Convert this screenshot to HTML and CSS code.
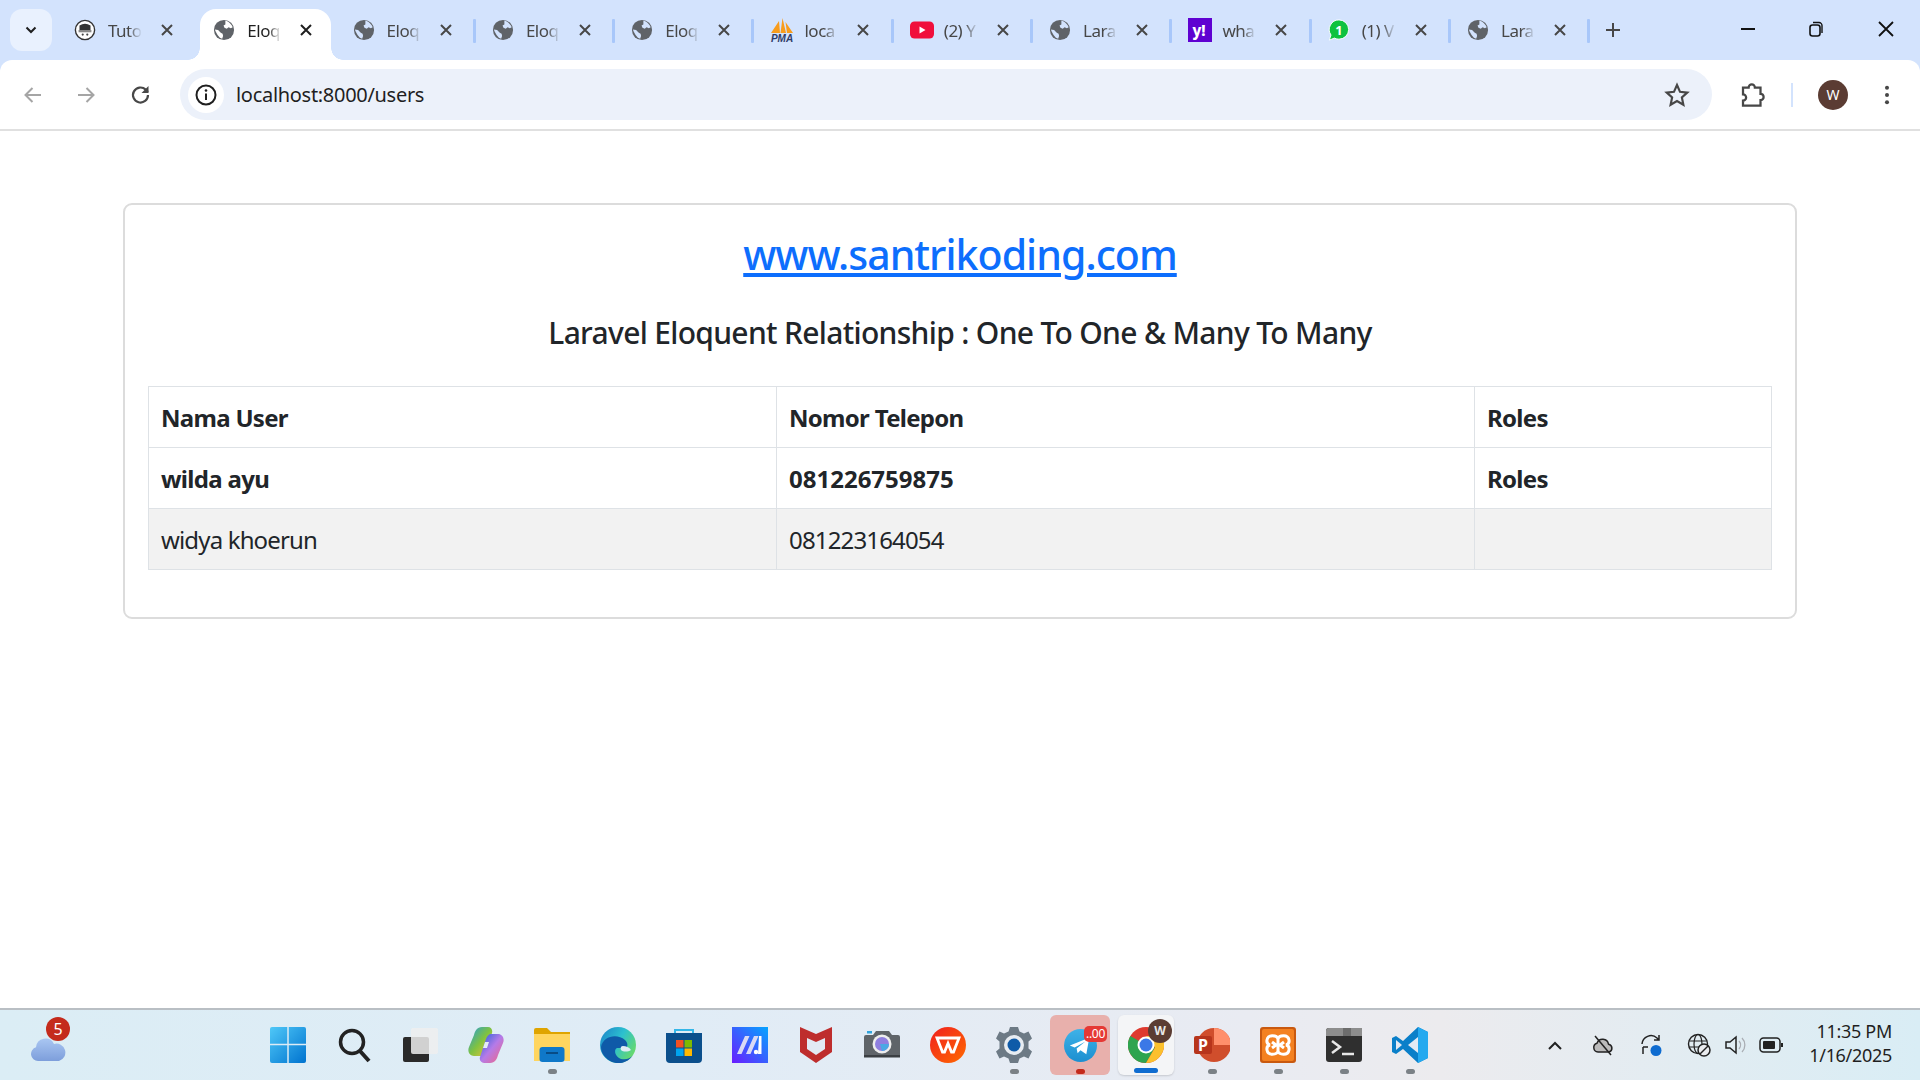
FILE: index.html
```html
<!DOCTYPE html>
<html lang="en">
<head>
    <meta charset="UTF-8">
    <title>Users</title>
    <link rel="stylesheet" href="styles.css">
</head>
<body>
    <svg class="defs" width="0" height="0">
        <symbol id="globe" viewBox="0 0 24 24">
            <circle cx="12" cy="12" r="11" fill="#5f6368"/>
            <path class="globe-cut" d="M13.500 2c2 .5 3.500 1 5 2.500 1.500 1.500 2.500 3 3 4.500l-2 1-2.500-1-2 1.500-2.500-1-1-2.500 2-1z"/>
            <path class="globe-cut" d="M2 11.500l3.500.5 3 3 2 1 .5 2.500-1 3-2.500-1-2.500-3-2-3.500z"/>
        </symbol>
        <symbol id="close" viewBox="0 0 16 16">
            <path d="M3 3l10 10M13 3L3 13" stroke="currentColor" stroke-width="2" fill="none"/>
        </symbol>
    </svg>

    <header class="tabstrip">
        <div class="tab-search">
            <svg width="14" height="14" viewBox="0 0 14 14"><path d="M2.500 4.500L7 9l4.500-4.500" stroke="#1f1f1f" stroke-width="2" fill="none"/></svg>
        </div>
        <div class="tabs">
            <div class="tab sep-none">
                <svg class="fav" viewBox="0 0 24 24">
                    <circle cx="12" cy="12" r="10.500" fill="#fff" stroke="#333" stroke-width="1.500"/>
                    <path d="M6 7q6-3.500 12 0v5H6z" fill="#333"/>
                    <path d="M5 12h14v2.500H5z" fill="#888"/>
                    <circle cx="9.500" cy="17" r="1.200" fill="#444"/><circle cx="14.500" cy="17" r="1.200" fill="#444"/>
                </svg>
                <span class="tab-title">Tuto</span>
                <svg class="tab-close"><use href="#close"/></svg>
            </div>
            <div class="tab active">
                <svg class="fav"><use href="#globe"/></svg>
                <span class="tab-title">Eloq</span>
                <svg class="tab-close"><use href="#close"/></svg>
            </div>
            <div class="tab">
                <svg class="fav"><use href="#globe"/></svg>
                <span class="tab-title">Eloq</span>
                <svg class="tab-close"><use href="#close"/></svg>
            </div>
            <div class="tab">
                <svg class="fav"><use href="#globe"/></svg>
                <span class="tab-title">Eloq</span>
                <svg class="tab-close"><use href="#close"/></svg>
            </div>
            <div class="tab">
                <svg class="fav"><use href="#globe"/></svg>
                <span class="tab-title">Eloq</span>
                <svg class="tab-close"><use href="#close"/></svg>
            </div>
            <div class="tab">
                <svg class="fav fav-wide" viewBox="0 0 24 24">
                    <path d="M1 15L9 3l1 12zM10.500 15L12.500 0l3.500 15zM17 15L15.500 4 23 15z" fill="#f89c1c"/>
                    <text x="12" y="23.500" class="pma-text">PMA</text>
                </svg>
                <span class="tab-title">loca</span>
                <svg class="tab-close"><use href="#close"/></svg>
            </div>
            <div class="tab">
                <svg class="fav fav-wide" viewBox="0 0 24 24">
                    <rect x="0" y="3.500" width="24" height="17" rx="4.500" fill="#f00f3c"/>
                    <path d="M9.500 8.500l6 3.500-6 3.500z" fill="#fff"/>
                </svg>
                <span class="tab-title">(2) Y</span>
                <svg class="tab-close"><use href="#close"/></svg>
            </div>
            <div class="tab">
                <svg class="fav"><use href="#globe"/></svg>
                <span class="tab-title">Lara</span>
                <svg class="tab-close"><use href="#close"/></svg>
            </div>
            <div class="tab">
                <svg class="fav fav-wide" viewBox="0 0 24 24">
                    <rect width="24" height="24" fill="#5f01d1"/>
                    <text x="11" y="18" class="yahoo-text">y!</text>
                </svg>
                <span class="tab-title">wha</span>
                <svg class="tab-close"><use href="#close"/></svg>
            </div>
            <div class="tab">
                <svg class="fav" viewBox="0 0 24 24">
                    <path d="M12 1a10.500 10.500 0 0 1 0 21q-3 0-5-1.200L1.500 23l1.800-5.500A10.500 10.500 0 0 1 12 1z" fill="#0fc23e" stroke="#fff" stroke-width="1"/>
                    <text x="12" y="17" class="wa-text">1</text>
                </svg>
                <span class="tab-title">(1) V</span>
                <svg class="tab-close"><use href="#close"/></svg>
            </div>
            <div class="tab">
                <svg class="fav"><use href="#globe"/></svg>
                <span class="tab-title">Lara</span>
                <svg class="tab-close"><use href="#close"/></svg>
            </div>
        </div>
        <svg class="new-tab" viewBox="0 0 16 16"><path d="M8 1v14M1 8h14" stroke="#474747" stroke-width="2" fill="none"/></svg>
        <div class="window-controls">
            <svg viewBox="0 0 16 16"><path d="M1 8h14" stroke="#111" stroke-width="2"/></svg>
            <svg viewBox="0 0 16 16"><rect x="2" y="4" width="10" height="11" rx="2.500" fill="none" stroke="#111" stroke-width="1.600"/><path d="M5 1.500h6a3 3 0 0 1 3 3V12" fill="none" stroke="#111" stroke-width="1.400"/></svg>
            <svg viewBox="0 0 16 16"><path d="M1 1l14 14M15 1L1 15" stroke="#111" stroke-width="1.800"/></svg>
        </div>
    </header>

    <nav class="toolbar">
        <svg class="tool tool-off" viewBox="0 0 24 24"><path d="M20 12H5M11.500 5L4.500 12l7 7" fill="none" stroke="#a5a5a5" stroke-width="2"/></svg>
        <svg class="tool tool-off" viewBox="0 0 24 24"><path d="M4 12h15M12.500 5l7 7-7 7" fill="none" stroke="#a5a5a5" stroke-width="2"/></svg>
        <svg class="tool" viewBox="0 0 24 24"><path d="M19 12a7.500 7.500 0 1 1-2.300-5.400L19 9" fill="none" stroke="#474747" stroke-width="2.200"/><path d="M19.500 3v7h-7z" fill="#474747"/></svg>
        <div class="omnibox">
            <div class="site-chip">
                <svg width="24" height="24" viewBox="0 0 24 24"><circle cx="12" cy="12" r="9.500" fill="none" stroke="#1f1f1f" stroke-width="2"/><path d="M12 10.500V17" stroke="#1f1f1f" stroke-width="2"/><circle cx="12" cy="7.500" r="1.300" fill="#1f1f1f"/></svg>
            </div>
            <span class="url">localhost:8000/users</span>
            <svg class="star" viewBox="0 0 24 24"><path d="M12 2.800l2.800 6.300 6.700.7-5 4.500 1.400 6.700-5.900-3.400-5.900 3.400 1.400-6.700-5-4.500 6.700-.7z" fill="none" stroke="#474747" stroke-width="2"/></svg>
        </div>
        <svg class="ext" viewBox="0 0 24 24"><path d="M4 6h4.500a2.500 2.500 0 0 1 5 0H18v5a2.500 2.500 0 0 1 0 5v4.500H4v-4a2.500 2.500 0 0 0 0-5z" fill="none" stroke="#474747" stroke-width="1.800"/></svg>
        <div class="tool-sep"></div>
        <div class="avatar">W</div>
        <svg class="menu-dots" viewBox="0 0 6 24"><circle cx="3" cy="4" r="2.200" fill="#474747"/><circle cx="3" cy="12" r="2.200" fill="#474747"/><circle cx="3" cy="20" r="2.200" fill="#474747"/></svg>
    </nav>

    <main class="page">
        <div class="card">
            <h3 class="site-link"><a href="#">www.santrikoding.com</a></h3>
            <h5 class="subtitle">Laravel Eloquent Relationship : One To One &amp; Many To Many</h5>
            <table class="users">
                <colgroup><col class="col-name"><col class="col-phone"><col></colgroup>
                <tr>
                    <th>Nama User</th>
                    <th>Nomor Telepon</th>
                    <th>Roles</th>
                </tr>
                <tr>
                    <th>wilda ayu</th>
                    <th class="digits">081226759875</th>
                    <th>Roles</th>
                </tr>
                <tr class="striped">
                    <td>widya khoerun</td>
                    <td>081223164054</td>
                    <td></td>
                </tr>
            </table>
        </div>
    </main>

    <footer class="taskbar">
        <div class="weather">
            <svg width="36" height="26" viewBox="0 0 36 26">
                <defs><linearGradient id="cloud" x1="0" y1="0" x2="0" y2="1"><stop offset="0" stop-color="#a9c6f2"/><stop offset="1" stop-color="#7d9edb"/></linearGradient></defs>
                <path d="M8 25a7 7 0 0 1-2-13.700A9.500 9.500 0 0 1 24 8a8.500 8.500 0 0 1 5 17z" fill="url(#cloud)"/>
            </svg>
            <span class="weather-badge">5</span>
        </div>
        <div class="apps">
            <div class="app"><div class="app-inner">
                <svg class="icon" viewBox="0 0 36 36">
                    <defs><linearGradient id="win" x1="0" y1="0" x2="1" y2="1"><stop offset="0" stop-color="#4fc8f8"/><stop offset="1" stop-color="#0073cf"/></linearGradient></defs>
                    <rect width="36" height="36" rx="2" fill="url(#win)"/>
                    <path d="M0 17.500h36M18 0v36" stroke="#dcebf5" stroke-width="1.500"/>
                </svg>
            </div></div>
            <div class="app"><div class="app-inner">
                <svg class="icon" viewBox="0 0 36 36"><circle cx="16" cy="15" r="11.500" fill="none" stroke="#222" stroke-width="3.500"/><path d="M24 24l9 10" stroke="#222" stroke-width="4"/></svg>
            </div></div>
            <div class="app"><div class="app-inner">
                <svg class="icon" viewBox="0 0 36 36"><rect x="1" y="10" width="26" height="25" rx="2" fill="#2a2a2a"/><rect x="9" y="1" width="27" height="26" rx="2" fill="#eeeeee" fill-opacity=".85"/></svg>
            </div></div>
            <div class="app"><div class="app-inner">
                <svg class="icon" viewBox="0 0 36 36">
                    <defs>
                        <linearGradient id="cpA" x1="0" y1="0" x2="1" y2="1"><stop offset="0" stop-color="#1f9cdf"/><stop offset=".5" stop-color="#7fc241"/><stop offset="1" stop-color="#f6c33b"/></linearGradient>
                        <linearGradient id="cpB" x1="0" y1="0" x2="1" y2="1"><stop offset="0" stop-color="#1b5fd9"/><stop offset=".5" stop-color="#b57be8"/><stop offset="1" stop-color="#f5647c"/></linearGradient>
                    </defs>
                    <path d="M20 0h-6C9 0 7 4 6 8L1 20c-2 5 1 9 5 9h7c2 0 4-2 5-5l6-18c1-3-1-6-4-6z" fill="url(#cpA)"/>
                    <path d="M16 36h6c5 0 7-4 8-8l5-12c2-5-1-9-5-9h-7c-2 0-4 2-5 5l-6 18c-1 3 1 6 4 6z" fill="url(#cpB)"/>
                    <path d="M17 15h4l-2 6h-4z" fill="#e4ecf6"/>
                </svg>
            </div></div>
            <div class="app open"><div class="app-inner">
                <svg class="icon" viewBox="0 0 36 36">
                    <path d="M0 3a2 2 0 0 1 2-2h11l4 4h19v6H0z" fill="#dfa400"/>
                    <path d="M0 7h36v27H0z" fill="#ffd55f"/>
                    <rect x="5.500" y="20" width="25" height="15" rx="3" fill="#0f78c9"/>
                    <rect x="12" y="25" width="12" height="2" fill="#084c86"/>
                </svg>
            </div></div>
            <div class="app"><div class="app-inner">
                <svg class="icon" viewBox="0 0 36 36">
                    <defs><linearGradient id="edge" x1="0" y1="0" x2="1" y2=".6"><stop offset="0" stop-color="#1b7fc9"/><stop offset=".55" stop-color="#2cc1cf"/><stop offset="1" stop-color="#66d96f"/></linearGradient></defs>
                    <circle cx="18" cy="18" r="18" fill="url(#edge)"/>
                    <path d="M1 20C3 9 17 6 25 13c3 3 3 6 1 8h-9c-3 1-3 8 4 11 5 1 9 0 12-4-4 7-13 10-21 7C6 32 1 27 1 20z" fill="#0f5aa8"/>
                    <path d="M23 19c3 0 6 1 8 4-3 2-8 2-10 0-1-2 0-4 2-4z" fill="#dfecf5"/>
                </svg>
            </div></div>
            <div class="app"><div class="app-inner">
                <svg class="icon" viewBox="0 0 36 36">
                    <path d="M9 8V3h18v5" fill="none" stroke="#34b6e8" stroke-width="2"/>
                    <path d="M0 6h36v26a4 4 0 0 1-4 4H4a4 4 0 0 1-4-4z" fill="#0b4f8c"/>
                    <rect x="10" y="13" width="7.500" height="7.500" fill="#f25022"/><rect x="18.500" y="13" width="7.500" height="7.500" fill="#7fba00"/>
                    <rect x="10" y="21.500" width="7.500" height="7.500" fill="#00a4ef"/><rect x="18.500" y="21.500" width="7.500" height="7.500" fill="#ffb900"/>
                </svg>
            </div></div>
            <div class="app"><div class="app-inner">
                <svg class="icon" viewBox="0 0 36 36">
                    <defs><linearGradient id="mm" x1="1" y1="0" x2="0" y2="1"><stop offset="0" stop-color="#05a5ff"/><stop offset="1" stop-color="#6a1cff"/></linearGradient></defs>
                    <rect width="36" height="36" fill="url(#mm)"/>
                    <path d="M5 27L13 9h4.500L9.500 27zM14 27L22 9h4.500L18.500 27z" fill="#d9d9f5"/>
                    <path d="M27 9h2.500v18H26z" fill="#fff"/><circle cx="24" cy="25" r="2.200" fill="#fff"/>
                </svg>
            </div></div>
            <div class="app"><div class="app-inner">
                <svg class="icon shield" viewBox="0 0 32 36"><path d="M0 0l16 7 16-7v25l-16 11L0 25z" fill="#be2d2d"/><path d="M7 11l9 4 9-4v11l-9 6-9-6z" fill="#e2eaf4"/></svg>
            </div></div>
            <div class="app"><div class="app-inner">
                <svg class="icon" viewBox="0 0 36 36">
                    <path d="M0 10a2 2 0 0 1 2-2h7l3-4h13l3 4h6a2 2 0 0 1 2 2v20H0z" fill="#5f6469"/>
                    <rect y="28" width="36" height="2.500" fill="#3b3f43"/>
                    <rect x="3" y="4" width="5" height="2.500" fill="#2ea4dd"/>
                    <circle cx="18" cy="17" r="9.500" fill="#eee"/>
                    <circle cx="18" cy="17" r="7" fill="#8f7fe0"/>
                    <path d="M18 24a7 7 0 0 0 7-7h-9z" fill="#4aa8e4"/>
                </svg>
            </div></div>
            <div class="app"><div class="app-inner">
                <svg class="icon" viewBox="0 0 36 36">
                    <defs><linearGradient id="wps" x1="0" y1="0" x2="1" y2="1"><stop offset="0" stop-color="#f01f1f"/><stop offset="1" stop-color="#ff6a00"/></linearGradient></defs>
                    <circle cx="18" cy="18" r="18" fill="url(#wps)"/>
                    <path d="M7 11h22l-5.500 14h-2L18 16.500 14.500 25h-2z" fill="none" stroke="#fff" stroke-width="2.800"/>
                </svg>
            </div></div>
            <div class="app open"><div class="app-inner">
                <svg class="icon" viewBox="0 0 36 36">
                    <path d="M14 0h8l1.500 4.500 4.500 2 4.500-2 3.500 7-3.500 3v7l3.500 3-3.500 7-4.500-2-4.500 2L22 36h-8l-1.500-4.500-4.500-2-4.500 2-3.500-7 3.500-3v-7L0 11.500l3.500-7 4.500 2 4.500-2z" fill="#6d7a85"/>
                    <circle cx="18" cy="18" r="10" fill="#e8edf2"/>
                    <circle cx="18" cy="18" r="6.500" fill="#0f5ba8"/>
                </svg>
            </div></div>
            <div class="app open-red"><div class="app-inner app-flash">
                <svg class="icon-tg" viewBox="0 0 34 34">
                    <defs><linearGradient id="tg" x1="0" y1="0" x2="0" y2="1"><stop offset="0" stop-color="#3fb2e8"/><stop offset="1" stop-color="#1c8fd0"/></linearGradient></defs>
                    <circle cx="17" cy="17" r="17" fill="url(#tg)"/>
                    <path d="M6 17l20-8-3 17-6-4-3 3-1-5 9-7-11 6z" fill="#fff"/>
                </svg>
                <span class="tg-badge">..00</span>
            </div></div>
            <div class="app open-blue"><div class="app-inner app-active">
                <svg class="icon" viewBox="0 0 36 36">
                    <circle cx="18" cy="18" r="18" fill="#de3a2f"/>
                    <path d="M18 18L2.400 9A18 18 0 0 0 18 36l9-15.500z" fill="#2ea44f"/>
                    <path d="M18 9h15.600A18 18 0 0 1 18 36l9-15.500z" fill="#fbc02d"/>
                    <circle cx="18" cy="18" r="8.500" fill="#fff"/>
                    <circle cx="18" cy="18" r="6.500" fill="#3b78e7"/>
                </svg>
                <span class="chrome-profile">W</span>
            </div></div>
            <div class="app open"><div class="app-inner">
                <svg class="icon" viewBox="0 0 36 36">
                    <circle cx="20" cy="18" r="17" fill="#d04e2c"/>
                    <path d="M20 1a17 17 0 0 1 17 17H20z" fill="#ff8f6b"/>
                    <rect x="0" y="9" width="18" height="18" rx="2" fill="#b7351c"/>
                    <text x="9" y="23.500" class="ppt-text">P</text>
                </svg>
            </div></div>
            <div class="app open"><div class="app-inner">
                <svg class="icon" viewBox="0 0 36 36">
                    <rect width="36" height="36" rx="3" fill="#c9590f"/>
                    <rect x="2" y="2" width="32" height="32" rx="2" fill="#f48120"/>
                    <path d="M18 12c-1-4-10-5-11 1-.5 3 1 4.500 3 5-2 .5-3.500 2-3 5 1 6 10 5 11 1 1 4 10 5 11-1 .5-3-1-4.500-3-5 2-.5 3.500-2 3-5-1-6-10-5-11-1zM18 12v12M12 15l4 3-4 3M24 15l-4 3 4 3" fill="none" stroke="#fff" stroke-width="3"/>
                </svg>
            </div></div>
            <div class="app open"><div class="app-inner">
                <svg class="icon" viewBox="0 0 36 36">
                    <rect y="1" width="36" height="34" rx="3" fill="#2f2f2f"/>
                    <path d="M0 4a3 3 0 0 1 3-3h33v8H0z" fill="#8d8d8d"/>
                    <rect x="17" y="1" width="8" height="8" fill="#6d6d6d"/>
                    <path d="M6 14l8 6-8 6" fill="none" stroke="#e8e8e8" stroke-width="2.500"/>
                    <path d="M16 27h12" stroke="#e8e8e8" stroke-width="2.500"/>
                </svg>
            </div></div>
            <div class="app open"><div class="app-inner">
                <svg class="icon" viewBox="0 0 36 36">
                    <path d="M26 0l10 5v26l-10 5-15-14-7 5-4-2v-14l4-2 7 5z" fill="#0a7fc9"/>
                    <path d="M26 0l10 5v26l-10 5z" fill="#25a9ef"/>
                    <path d="M26 10v16l-10-8z" fill="#e4eaf4"/>
                    <path d="M4 13l6 5-6 5z" fill="#e4eaf4"/>
                </svg>
            </div></div>
        </div>
        <div class="tray">
            <svg class="tray-icon" viewBox="0 0 24 24"><path d="M6 16l6-6 6 6" fill="none" stroke="#222" stroke-width="2"/></svg>
            <svg class="tray-icon" viewBox="0 0 24 24"><path d="M7 19a4.500 4.500 0 0 1-1-8.800 6 6 0 0 1 11.500 1A4 4 0 0 1 18 19z" fill="#bbb" stroke="#222" stroke-width="1.500"/><path d="M4 3l16 19" stroke="#222" stroke-width="1.500"/></svg>
            <svg class="tray-icon" viewBox="0 0 24 24"><path d="M3 11a9 9 0 0 1 15-6l2 2M20 2v5h-5M4 14v7M4 14h5" fill="none" stroke="#222" stroke-width="1.500"/><circle cx="17" cy="17.500" r="5.500" fill="#0f6cd0"/></svg>
            <svg class="tray-icon" viewBox="0 0 24 24"><circle cx="11" cy="11" r="9.500" fill="none" stroke="#222" stroke-width="1.400"/><ellipse cx="11" cy="11" rx="4" ry="9.500" fill="none" stroke="#222" stroke-width="1.200"/><path d="M2 8h18M2 14h18" stroke="#222" stroke-width="1.200"/><circle cx="17" cy="17" r="6" fill="#e9ebee" stroke="#222" stroke-width="1.500"/><path d="M13 21l8-8" stroke="#222" stroke-width="1.500"/></svg>
            <svg class="tray-icon tray-close" viewBox="0 0 24 24"><path d="M3 9h4l6-5v16l-6-5H3z" fill="none" stroke="#222" stroke-width="1.500"/><path d="M16 8a6 6 0 0 1 0 8M19 5a10 10 0 0 1 0 14" fill="none" stroke="#a9adb3" stroke-width="1.300"/></svg>
            <svg class="tray-icon tray-close" viewBox="0 0 24 24"><rect x="1" y="5" width="20" height="14" rx="3.500" fill="none" stroke="#222" stroke-width="1.500"/><rect x="4" y="8" width="12" height="8" rx="1" fill="#222"/><path d="M23 10v4" stroke="#222" stroke-width="2"/></svg>
        </div>
        <div class="clock">
            <span>11:35 PM</span>
            <span>1/16/2025</span>
        </div>
    </footer>
</body>
</html>
```

FILE: styles.css
```css
* {
    box-sizing: border-box;
}
html, body {
    height: 100%;
}
body {
    margin: 0;
    display: flex;
    flex-direction: column;
    overflow: hidden;
    background: #d3e3fd;
    color: #212529;
    font-family: "Noto Sans", "Open Sans", sans-serif;
}
.defs {
    display: none;
}
.globe-cut {
    fill: var(--cut, #d3e3fd);
}

/* tab strip */
.tabstrip {
    height: 60px;
    flex: none;
    display: flex;
    align-items: stretch;
    background: #d3e3fd;
}
.tab-search {
    width: 42px;
    height: 42px;
    margin: 9px 4px 0 10px;
    border-radius: 12px;
    background: #e9f1fe;
    display: flex;
    align-items: center;
    justify-content: center;
}
.tabs {
    display: flex;
}
.tab {
    width: 139.3px;
    position: relative;
    display: flex;
    align-items: center;
    padding: 0 0 0 18px;
    color: #474747;
    font-size: 17px;
    letter-spacing: -.5px;
}
.tab::after {
    content: "";
    position: absolute;
    right: -2px;
    top: 19px;
    width: 3px;
    height: 24px;
    border-radius: 1px;
    background: #a8c7fa;
}
.tab.sep-none::after {
    display: none;
}
/* active tab: rounded top, flared bottom corners */
.tab.active {
    --cut: #fff;
    width: 130.3px;
    margin: 9px 4px 0 5px;
    padding: 0 0 9px 13px;
    border-radius: 16px 16px 0 0;
    background: #fff;
    color: #1f1f1f;
}
.tab.active::before, .tab.active::after {
    content: "";
    position: absolute;
    top: auto;
    bottom: 0;
    width: 12px;
    height: 12px;
    border-radius: 0;
}
.tab.active::before {
    left: -12px;
    background: radial-gradient(circle at 0 0, transparent 11.500px, #fff 12px);
}
.tab.active::after {
    right: -12px;
    background: radial-gradient(circle at 100% 0, transparent 11.500px, #fff 12px);
}
.tab-title, .fav, .tab-close {
    flex: none;
}
.fav {
    width: 22px;
    height: 24px;
}
.fav-wide {
    width: 24px;
    margin-right: -2px;
}
.tab-title {
    width: 34px;
    margin-left: 12px;
    white-space: nowrap;
    -webkit-mask-image: linear-gradient(90deg, #000 60%, transparent);
    mask-image: linear-gradient(90deg, #000 60%, transparent);
}
.tab-close {
    width: 16px;
    height: 16px;
    margin-left: 17px;
    color: #474747;
}
.tab.active .tab-close {
    color: #1f1f1f;
}
.pma-text {
    font: italic 700 10px "Liberation Sans", sans-serif;
    text-anchor: middle;
    fill: #2f3b68;
    letter-spacing: 0;
}
.yahoo-text {
    font: 800 15px "Noto Sans", sans-serif;
    text-anchor: middle;
    fill: #fff;
    letter-spacing: 0;
}
.wa-text {
    font: 700 14px "Noto Sans", sans-serif;
    text-anchor: middle;
    fill: #fff;
    letter-spacing: 0;
}
.new-tab {
    width: 16px;
    height: 16px;
    margin: 22px 0 0 17px;
}
.window-controls {
    margin-left: auto;
    display: flex;
    gap: 52px;
    padding: 21px 26px 0 0;
}
.window-controls svg {
    width: 16px;
    height: 16px;
}
.window-controls svg:nth-child(2) {
    margin-right: 2px;
}

/* toolbar */
.toolbar {
    height: 71px;
    flex: none;
    display: flex;
    align-items: center;
    padding: 0 0 0 21px;
    background: #fff;
    border-bottom: 2px solid #e0e0e0;
    border-radius: 12px 12px 0 0;
}
.tool {
    width: 24px;
    height: 24px;
    margin-right: 29px;
    flex: none;
}
.tool-off + .tool-off {
    margin-right: 31px;
}
.tool-off + .tool:not(.tool-off) {
    margin-right: 27px;
}
.omnibox {
    width: 1532px;
    height: 51px;
    flex: none;
    border-radius: 26px;
    background: #ecf1fa;
    display: flex;
    align-items: center;
    padding: 0 22px 0 8px;
}
.site-chip {
    width: 36px;
    height: 36px;
    border-radius: 50%;
    background: #fff;
    display: flex;
    align-items: center;
    justify-content: center;
}
.url {
    margin-left: 12px;
    font-size: 20px;
    color: #1f1f1f;
    letter-spacing: -.3px;
}
.star {
    margin-left: auto;
    width: 26px;
    height: 26px;
}
.ext {
    width: 30px;
    height: 30px;
    margin-left: 26px;
}
.tool-sep {
    width: 2px;
    height: 24px;
    margin-left: 23px;
    background: #d3e3fd;
}
.avatar {
    width: 30px;
    height: 30px;
    margin-left: 25px;
    border-radius: 50%;
    background: #5b3c33;
    color: #fff;
    font-size: 14px;
    display: flex;
    align-items: center;
    justify-content: center;
}
.menu-dots {
    width: 6px;
    height: 22px;
    margin-left: 36px;
}

/* page */
.page {
    flex: 1;
    padding: 72px 123px 0;
    background: #fff;
}
.card {
    height: 416px;
    padding: 24px 23px 0;
    border: 2px solid #dcdcdc;
    border-radius: 9px;
}
.site-link {
    margin: 0 0 36px;
    font-size: 41px;
    line-height: 50px;
    font-weight: 500;
    text-align: center;
    letter-spacing: -.96px;
}
.site-link a {
    color: #0d6efd;
}
.subtitle {
    margin: 0 0 35px;
    font-size: 30px;
    line-height: 36px;
    font-weight: 500;
    text-align: center;
    letter-spacing: -.68px;
}
.users {
    width: 100%;
    table-layout: fixed;
    border-collapse: collapse;
    font-size: 24px;
    line-height: 36px;
}
.col-name {
    width: 628px;
}
.col-phone {
    width: 698px;
}
.users th, .users td {
    height: 61px;
    padding: 13px 12px 11px;
    border: 1.500px solid #dee2e6;
    text-align: left;
}
.users th {
    font-weight: 700;
    letter-spacing: -.7px;
}
.users th.digits {
    letter-spacing: 0;
}
.users td {
    font-weight: 400;
    letter-spacing: -.85px;
}
.striped td {
    background: #f2f2f2;
}

/* taskbar */
.taskbar {
    height: 72px;
    flex: none;
    display: flex;
    align-items: center;
    border-top: 2px solid #b9bfc4;
    background: linear-gradient(90deg, #dbedf5 0%, #e0ecf6 35%, #e9ebf2 65%, #ecebee 75%, #d9edf5 100%);
}
.weather {
    width: 255px;
    flex: none;
    padding: 8px 0 0 30px;
    position: relative;
}
.weather svg {
    display: block;
}
.weather-badge {
    position: absolute;
    left: 46px;
    top: -11px;
    width: 24px;
    height: 24px;
    border-radius: 50%;
    background: #c42b1c;
    color: #fff;
    font-size: 16px;
    line-height: 24px;
    text-align: center;
}
.apps {
    display: flex;
    flex: none;
}
.app {
    width: 66px;
    height: 60px;
    display: flex;
    justify-content: center;
    position: relative;
}
.app-inner {
    width: 60px;
    height: 60px;
    position: relative;
    display: flex;
    align-items: center;
    justify-content: center;
}
.icon {
    width: 36px;
    height: 36px;
}
.icon.shield {
    width: 32px;
}
.app.open::after, .app.open-red::after, .app.open-blue::after {
    content: "";
    position: absolute;
    left: 50%;
    bottom: 1px;
    width: 9px;
    height: 5px;
    margin-left: -4px;
    border-radius: 3px;
    background: #7b8186;
}
.app.open-red::after {
    background: #c42b1c;
}
.app.open-blue::after {
    width: 24px;
    margin-left: -12px;
    bottom: 2px;
    background: #0f6cd0;
}
.app-flash {
    border-radius: 6px;
    background: #e8b0ac;
}
.icon-tg {
    width: 33px;
    height: 33px;
}
.tg-badge {
    position: absolute;
    right: 3px;
    top: 11px;
    width: 23px;
    height: 16px;
    border-radius: 5px;
    background: #e53935;
    color: #fff;
    font-size: 12px;
    line-height: 16px;
    text-align: center;
    letter-spacing: -.3px;
}
.app-active {
    width: 56px;
    border-radius: 6px;
    background: #f4f5f7;
    box-shadow: 0 1px 2px rgba(0, 0, 0, .15);
}
.chrome-profile {
    position: absolute;
    right: 2px;
    top: 4px;
    width: 24px;
    height: 24px;
    border-radius: 50%;
    background: #5b3c33;
    color: #e8e8e8;
    font-size: 12px;
    font-weight: 700;
    line-height: 24px;
    text-align: center;
}
.ppt-text {
    font: 700 16px "Noto Sans", sans-serif;
    text-anchor: middle;
    fill: #fff;
}
.tray {
    margin-left: 100px;
    display: flex;
    align-items: center;
    gap: 24px;
}
.tray-icon {
    width: 24px;
    height: 24px;
}
.tray-close {
    margin-left: -12px;
}
.clock {
    margin-left: auto;
    padding: 0 28px 4px 0;
    display: flex;
    flex-direction: column;
    align-items: flex-end;
    gap: 1px;
    font-size: 18px;
    line-height: 23px;
    letter-spacing: -.3px;
    color: #1f1f1f;
}
```
